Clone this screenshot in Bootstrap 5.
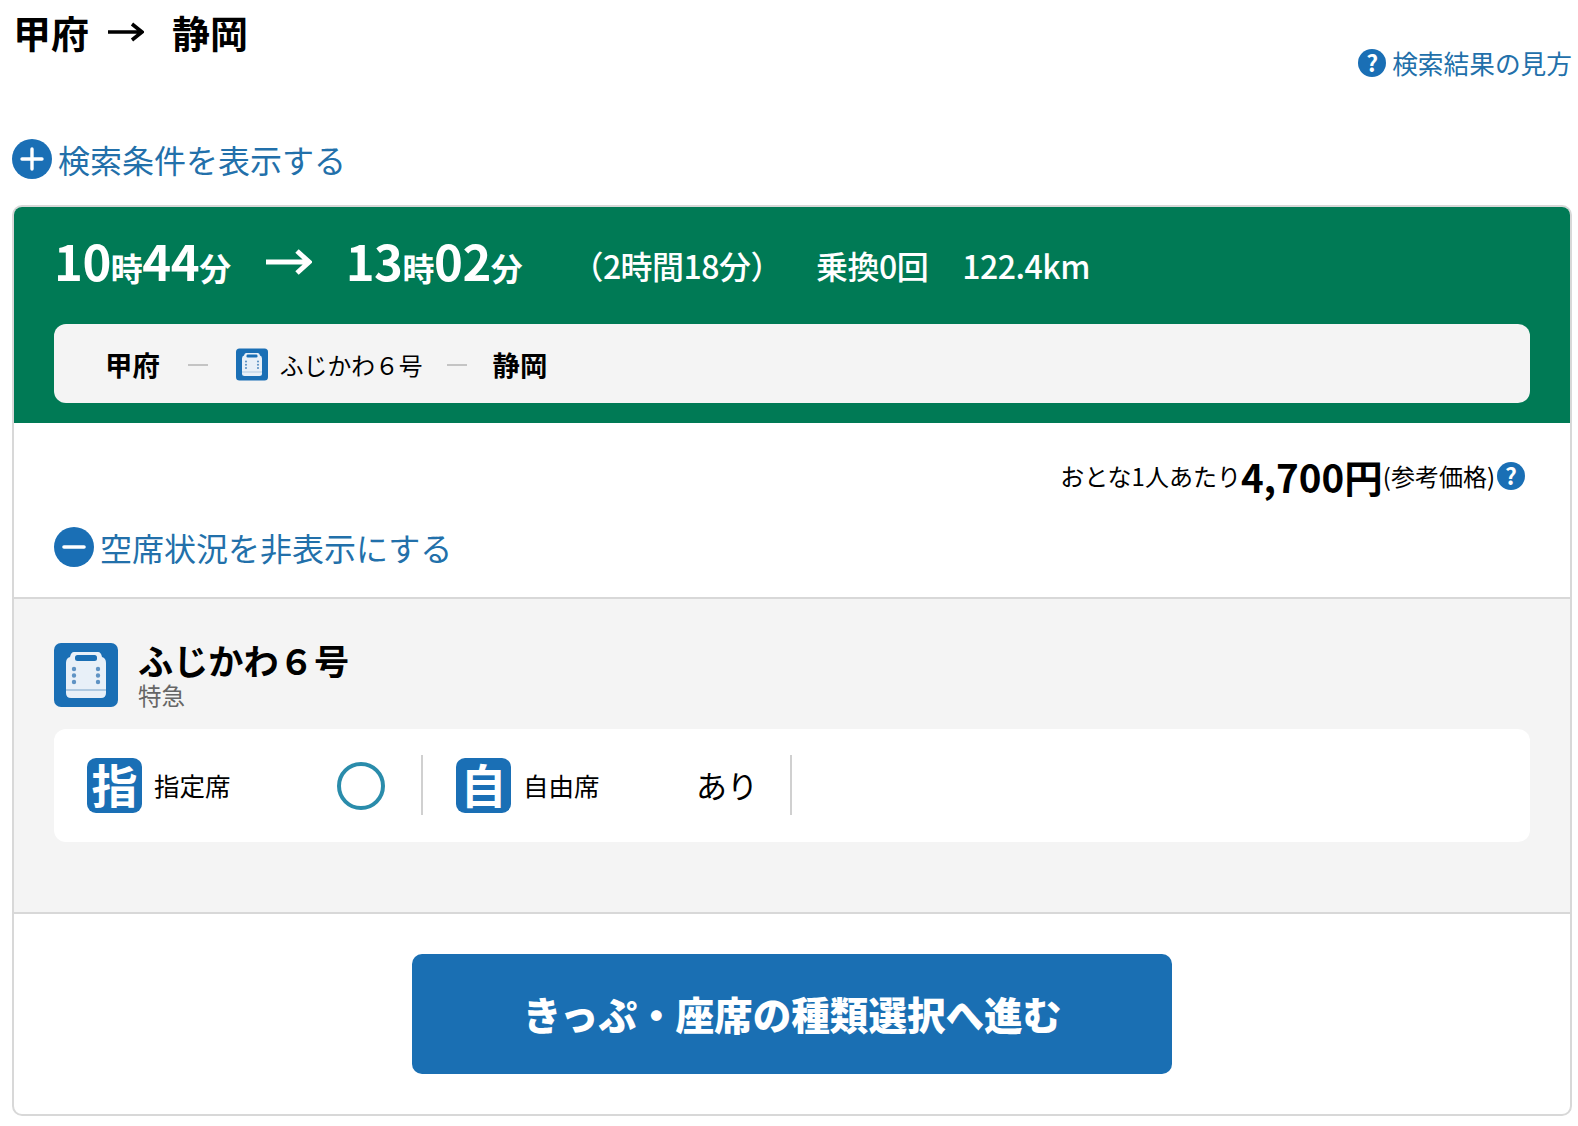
<!DOCTYPE html>
<html lang="ja">

<head>
    <meta charset="UTF-8">
    <meta name="viewport" content="width=device-width, initial-scale=1.0">
    <title>甲府 → 静岡</title>
    <link href="https://cdn.jsdelivr.net/npm/bootstrap@5.3.0/dist/css/bootstrap.min.css" rel="stylesheet">
    <style>
        body {
            font-family: "Noto Sans CJK JP", "Noto Sans", sans-serif;
            color: #000;
            background: #fff;
        }

        .page-wrap {
            padding: 0 6px 0 12px;
        }

        .top-row {
            height: 137px;
        }

        .route-title {
            font-size: 38px;
            font-weight: 700;
            line-height: 37px;
            margin: 13px 0 0 1px;
        }

        .route-arrow {
            margin: 0 28px 0 19px;
        }

        .help-link {
            font-size: 25.7px;
            line-height: 30px;
            color: #2270aa;
            text-decoration: none;
            margin-top: 48px;
            gap: 6px;
        }

        .help-mark {
            width: 28px;
            height: 28px;
            border-radius: 50%;
            background: #1a6fb5;
            color: #fff;
            font-size: 23px;
            font-weight: 700;
            line-height: 27px;
            text-align: center;
            flex: none;
        }

        .toggle-link {
            font-size: 32px;
            line-height: 40px;
            color: #2270aa;
            text-decoration: none;
            gap: 6px;
        }

        .search-toggle {
            margin: 2px 0 26px 0;
        }

        .result-card {
            border: 2px solid #d8d8d8;
            border-radius: 10px;
            overflow: hidden;
            height: 911px;
        }

        .result-head {
            background: #007a55;
            color: #fff;
            border: 0;
            border-radius: 0;
            padding: 0 40px;
            height: 216px;
        }

        .time-row {
            height: 116px;
            padding-top: 21px;
        }

        .time-big {
            font-size: 49px;
            font-weight: 700;
            line-height: 64px;
            letter-spacing: -.5px;
        }

        .time-unit {
            font-size: 32px;
        }

        .time-arrow {
            margin: 20px 34px 0 35px;
            display: block;
        }

        .time-note {
            font-size: 32px;
            line-height: 64px;
            font-weight: 500;
            letter-spacing: -.5px;
            padding-top: 5px;
        }

        .note-span {
            margin-left: 49px;
        }

        .note-change {
            margin-left: 34px;
        }

        .note-distance {
            margin-left: 34px;
        }

        .segment-bar {
            background: #f4f4f4;
            color: #000;
            border-radius: 12px;
            height: 79px;
            padding: 2px 0 0 51px;
            font-size: 23.8px;
            margin-top: 1px;
        }

        .segment-station {
            font-size: 27.4px;
            font-weight: 700;
        }

        .segment-dash {
            width: 20px;
            height: 2px;
            background: #c4c4c4;
            margin: 0 28px;
        }

        .segment-dash-short {
            margin: 0 26px 0 24px;
        }

        .segment-train {
            margin: 0 12px 0 0;
            width: 32px;
            height: 33px;
            display: block;
        }

        .price-row {
            padding: 32px 45px 0 0;
            height: 74px;
            font-size: 24px;
            line-height: 30px;
        }

        .price-big {
            font-size: 38.5px;
            font-weight: 700;
            line-height: 30px;
        }

        .price-row .help-mark {
            margin-left: 2px;
        }

        .seat-toggle-row {
            padding: 30px 40px 0;
            height: 100px;
        }

        .round-btn {
            width: 40px;
            height: 40px;
            flex: none;
            display: block;
        }

        .seat-panel {
            background: #f4f4f4;
            border-top: 2px solid #d8d8d8;
            border-bottom: 2px solid #d8d8d8;
            height: 317px;
            padding: 44px 40px 0;
        }

        .train-icon {
            width: 64px;
            height: 64px;
            flex: none;
            display: block;
        }

        .train-name {
            font-size: 35.2px;
            font-weight: 700;
            line-height: 40px;
            margin-top: -3px;
        }

        .train-type {
            font-size: 23.5px;
            line-height: 30px;
            color: #666;
        }

        .seat-box {
            background: #fff;
            border-radius: 12px;
            height: 113px;
            margin-top: 19px;
            padding: 26px 0 0 33px;
        }

        .seat-cell {
            height: 60px;
            border-right: 2px solid #d0d0d0;
            width: 336px;
            padding: 3px 0 2px;
        }

        .seat-cell+.seat-cell {
            margin-left: 33px;
        }

        .seat-kind {
            width: 55px;
            height: 55px;
            border-radius: 9px;
            background: #1a6fb5;
            color: #fff;
            font-size: 46px;
            font-weight: 700;
            line-height: 50px;
            text-align: center;
            flex: none;
        }

        .seat-name {
            font-size: 25.5px;
            margin-left: 12px;
            width: 183px;
        }

        .seat-circle {
            width: 48px;
            height: 48px;
            border: 4px solid #2a8cab;
            border-radius: 50%;
            flex: none;
        }

        .seat-word {
            font-size: 31px;
            margin-left: -10px;
        }

        .action-row {
            padding-top: 40px;
        }

        .btn.go-btn {
            width: 760px;
            height: 120px;
            background: #1a6fb3;
            border: 0;
            border-radius: 10px;
            color: #fff;
            font-size: 38.6px;
            font-weight: 900;
            padding: 0;
        }
    </style>
</head>

<body>
    <div class="page-wrap">
        <div class="top-row d-flex justify-content-between align-items-start">
            <h1 class="route-title d-flex align-items-center">
                <span>甲府</span>
                <svg class="route-arrow" width="36" height="22" viewBox="0 0 36 22" fill="none" stroke="#000" stroke-width="3.6">
                    <path d="M0 11H34M24 3l10 8-10 8" />
                </svg>
                <span>静岡</span>
            </h1>
            <a href="#" class="help-link d-flex align-items-center">
                <span class="help-mark">?</span>検索結果の見方
            </a>
        </div>

        <a href="#" class="toggle-link search-toggle d-inline-flex align-items-center">
            <svg class="round-btn" viewBox="0 0 40 40">
                <circle cx="20" cy="20" r="20" fill="#1a6fb5" />
                <path d="M20 10V30M10 20H30" stroke="#fff" stroke-width="3.4" stroke-linecap="round" />
            </svg>
            検索条件を表示する
        </a>

        <div class="card result-card">
            <div class="card-header result-head">
                <div class="time-row d-flex align-items-start">
                    <div class="time-big">10<span class="time-unit">時</span>44<span class="time-unit">分</span></div>
                    <svg class="time-arrow" width="46" height="28" viewBox="0 0 46 28" fill="none" stroke="#fff" stroke-width="5">
                        <path d="M0 14H43M31 3l12 11-12 11" />
                    </svg>
                    <div class="time-big">13<span class="time-unit">時</span>02<span class="time-unit">分</span></div>
                    <div class="time-note note-span">（2時間18分）</div>
                    <div class="time-note note-change">乗換0回</div>
                    <div class="time-note note-distance">122.4km</div>
                </div>
                <div class="segment-bar d-flex align-items-center">
                    <span class="segment-station">甲府</span>
                    <span class="segment-dash"></span>
                    <svg class="segment-train" viewBox="0 0 64 64">
                        <rect width="64" height="64" rx="7" fill="#1a6fb5" />
                        <path d="M20 9H44Q47 9 48 14Q52 15 52 20V50Q52 55 47 55H17Q12 55 12 50V20Q12 15 16 14Q17 9 20 9Z" fill="#e8f0f8" />
                        <rect x="21" y="12" width="22" height="6" rx="2.5" fill="#1a6fb5" />
                        <path d="M20 26v14M44 26v14" stroke="#5f93c4" stroke-width="4.4" stroke-linecap="round" stroke-dasharray="0 6.5" />
                        <path d="M12 47H52" stroke="#9dbcd9" stroke-width="1.5" />
                    </svg>
                    <span>ふじかわ６号</span>
                    <span class="segment-dash segment-dash-short"></span>
                    <span class="segment-station">静岡</span>
                </div>
            </div>

            <div class="price-row d-flex justify-content-end align-items-center">
                <span>おとな1人あたり</span><span class="price-big">4,700円</span><span>(参考価格)</span><span class="help-mark">?</span>
            </div>

            <div class="seat-toggle-row">
                <a href="#" class="toggle-link d-inline-flex align-items-center">
                    <svg class="round-btn" viewBox="0 0 40 40">
                        <circle cx="20" cy="20" r="20" fill="#1a6fb5" />
                        <path d="M10 20H30" stroke="#fff" stroke-width="3.6" stroke-linecap="round" />
                    </svg>
                    空席状況を非表示にする
                </a>
            </div>

            <div class="seat-panel">
                <div class="d-flex gap-3">
                    <svg class="train-icon me-1" viewBox="0 0 64 64">
                        <rect width="64" height="64" rx="7" fill="#1a6fb5" />
                        <path d="M20 9H44Q47 9 48 14Q52 15 52 20V50Q52 55 47 55H17Q12 55 12 50V20Q12 15 16 14Q17 9 20 9Z" fill="#e8f0f8" />
                        <rect x="21" y="12" width="22" height="6" rx="2.5" fill="#1a6fb5" />
                        <path d="M20 26v14M44 26v14" stroke="#5f93c4" stroke-width="4.4" stroke-linecap="round" stroke-dasharray="0 6.5" />
                        <path d="M12 47H52" stroke="#9dbcd9" stroke-width="1.5" />
                    </svg>
                    <div>
                        <div class="train-name">ふじかわ６号</div>
                        <div class="train-type">特急</div>
                    </div>
                </div>
                <div class="seat-box d-flex">
                    <div class="seat-cell d-flex align-items-start">
                        <span class="seat-kind">指</span>
                        <span class="seat-name align-self-center">指定席</span>
                        <span class="seat-circle align-self-center"></span>
                    </div>
                    <div class="seat-cell d-flex align-items-start">
                        <span class="seat-kind">自</span>
                        <span class="seat-name align-self-center">自由席</span>
                        <span class="seat-word align-self-center">あり</span>
                    </div>
                </div>
            </div>

            <div class="action-row d-flex justify-content-center">
                <button type="button" class="btn go-btn">きっぷ・座席の種類選択へ進む</button>
            </div>
        </div>
    </div>

    <script src="https://cdn.jsdelivr.net/npm/bootstrap@5.3.0/dist/js/bootstrap.bundle.min.js"></script>
</body>

</html>
